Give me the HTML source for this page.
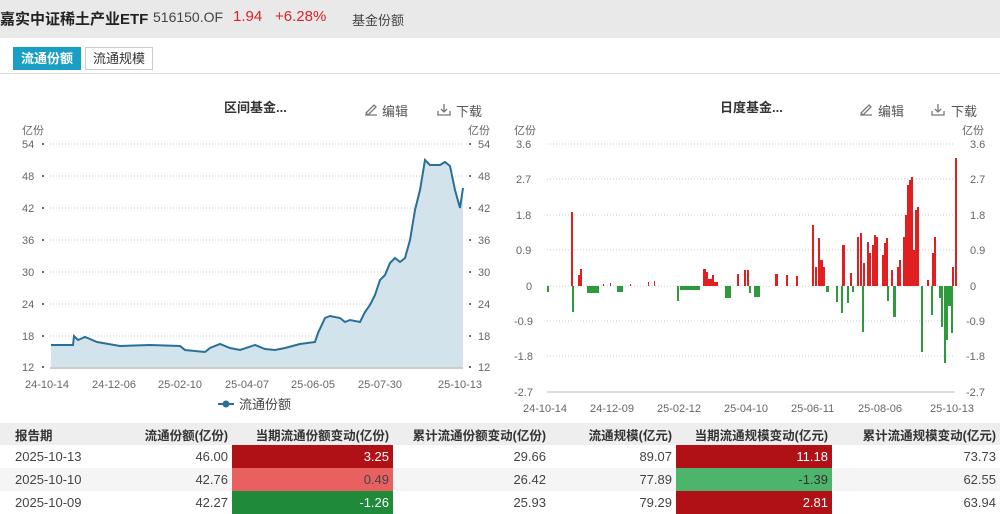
<!DOCTYPE html>
<html><head><meta charset="utf-8"><style>
*{margin:0;padding:0;box-sizing:border-box}
body{width:1000px;height:514px;overflow:hidden;background:#fff;font-family:"Liberation Sans","Noto Sans CJK SC",sans-serif;position:relative;color:#333}
.hdr{position:absolute;left:0;top:0;width:1000px;height:38px;background:#e9e9e9}
.hdr span{position:absolute;top:8px;font-size:15px}
.tab{position:absolute;top:47px;height:23px;font-size:13px;line-height:22px;padding:0 7px;border:1px solid #ccc}
table{position:absolute;left:0;top:423px;width:1000px;border-collapse:collapse;table-layout:fixed;font-family:"Liberation Sans Narrow","Liberation Sans","Noto Sans CJK SC",sans-serif;font-size:13px}
td{height:23px;text-align:right;padding:0 4px;color:#444;white-space:nowrap;overflow:hidden}
tr.h td{background:#eeeeee;font-weight:bold;color:#333;height:22px;font-size:12.5px}
td.l{text-align:left;padding-left:15px}
.r1{background:#b01116;color:#fff}.r2{background:#e96060;color:#444}.g1{background:#1f8a3a;color:#fff}.g2{background:#4cb46b;color:#333}
</style></head><body>
<div class="hdr">
<span style="left:0;font-weight:bold;color:#222">嘉实中证稀土产业ETF</span>
<span style="left:153px;font-size:14px;top:9px;color:#444">516150.OF</span>
<span style="left:233px;color:#d8232a">1.94</span>
<span style="left:275px;color:#d8232a">+6.28%</span>
<span style="left:352px;font-size:13px;top:10px;color:#444">基金份额</span>
</div>
<div class="tab" style="left:13px;background:#1a9fc4;color:#fff;border-color:#1a9fc4;font-weight:bold">流通份额</div>
<div class="tab" style="left:85px;background:#fff;color:#333">流通规模</div>
<div style="position:absolute;left:0;top:73px;width:1000px;height:1px;background:#ddd"></div>

<svg width="1000" height="420" style="position:absolute;left:0;top:0" font-family="Liberation Sans, Noto Sans CJK SC, sans-serif">
<g font-size="13" fill="#333" font-weight="bold"><text x="224" y="112">区间基金...</text><text x="720" y="112">日度基金...</text></g>
<g font-size="13" fill="#555"><text x="382" y="116">编辑</text><text x="456" y="116">下载</text><text x="878" y="116">编辑</text><text x="951" y="116">下载</text></g>
<g stroke="#777" fill="none" stroke-width="1.3"><path d="M365 115h12M366 113l8-8 2 2-8 8z"/><path d="M438 111v4h12v-4M444 104v8M441 109l3 3 3-3"/><path d="M860 115h12M861 113l8-8 2 2-8 8z"/><path d="M932 111v4h12v-4M938 104v8M935 109l3 3 3-3"/></g>
<g font-size="11" fill="#666"><text x="22" y="134">亿份</text><text x="468" y="134">亿份</text><text x="514" y="134">亿份</text><text x="962" y="134">亿份</text></g>
<g stroke="#ccc" stroke-dasharray="1 2"><path d="M50 144H463M50 176H463M50 208H463M50 240H463M50 272H463M50 304H463M50 336H463"/></g>
<g font-size="11" fill="#666">
<text x="22" y="148">54</text><text x="22" y="180">48</text><text x="22" y="212">42</text><text x="22" y="244">36</text><text x="22" y="276">30</text><text x="22" y="308">24</text><text x="22" y="340">18</text><text x="22" y="371">12</text>
<text x="478" y="148">54</text><text x="478" y="180">48</text><text x="478" y="212">42</text><text x="478" y="244">36</text><text x="478" y="276">30</text><text x="478" y="308">24</text><text x="478" y="340">18</text><text x="478" y="371">12</text>
<text x="25" y="388">24-10-14</text><text x="92" y="388">24-12-06</text><text x="158" y="388">25-02-10</text><text x="225" y="388">25-04-07</text><text x="291" y="388">25-06-05</text><text x="358" y="388">25-07-30</text><text x="438" y="388">25-10-13</text>
</g>
<g fill="#666"><rect x="42" y="143" width="2" height="2"/><rect x="42" y="175" width="2" height="2"/><rect x="42" y="207" width="2" height="2"/><rect x="42" y="239" width="2" height="2"/><rect x="42" y="271" width="2" height="2"/><rect x="42" y="303" width="2" height="2"/><rect x="42" y="335" width="2" height="2"/><rect x="42" y="366" width="2" height="2"/>
<rect x="469" y="143" width="2" height="2"/><rect x="469" y="175" width="2" height="2"/><rect x="469" y="207" width="2" height="2"/><rect x="469" y="239" width="2" height="2"/><rect x="469" y="271" width="2" height="2"/><rect x="469" y="303" width="2" height="2"/><rect x="469" y="335" width="2" height="2"/><rect x="469" y="366" width="2" height="2"/></g>
<path d="M51 367L51 345L73 345L74 336L78 340L85 337L90 339L97 342L120 346L150 345L180 346L185 350L205 352L210 348L220 344L230 348L240 350L255 345L265 349L275 350L285 348L300 344L315 342L318 333L325 318L330 316L340 318L345 322L350 320L360 322L365 312L370 305L375 295L380 280L385 275L390 263L395 258L400 262L405 258L410 240L415 210L420 190L425 160L430 165L440 165L445 162L450 166L455 190L460 208L463 188L463 367Z" fill="#d3e3ec"/>
<path d="M51 345L73 345L74 336L78 340L85 337L90 339L97 342L120 346L150 345L180 346L185 350L205 352L210 348L220 344L230 348L240 350L255 345L265 349L275 350L285 348L300 344L315 342L318 333L325 318L330 316L340 318L345 322L350 320L360 322L365 312L370 305L375 295L380 280L385 275L390 263L395 258L400 262L405 258L410 240L415 210L420 190L425 160L430 165L440 165L445 162L450 166L455 190L460 208L463 188" fill="none" stroke="#2a6f97" stroke-width="2"/>
<path d="M50 368H463" stroke="#999"/>
<path d="M218 404h16" stroke="#2a6f97" stroke-width="2"/><circle cx="226" cy="404" r="3.5" fill="#2a6f97"/>
<text x="239" y="409" font-size="13" fill="#444">流通份额</text>
<g stroke="#ccc" stroke-dasharray="1 2"><path d="M547 144H955M547 179H955M547 215H955M547 250H955M547 286H955M547 321H955M547 356H955"/></g>
<path d="M547 392H955" stroke="#bbb"/>
<g font-size="11" fill="#666">
<text x="516" y="148">3.6</text><text x="516" y="183">2.7</text><text x="516" y="219">1.8</text><text x="516" y="254">0.9</text><text x="526" y="290">0</text><text x="514" y="325">-0.9</text><text x="514" y="360">-1.8</text><text x="514" y="396">-2.7</text>
<text x="970" y="148">3.6</text><text x="970" y="183">2.7</text><text x="970" y="219">1.8</text><text x="970" y="254">0.9</text><text x="970" y="290">0</text><text x="966" y="325">-0.9</text><text x="966" y="360">-1.8</text><text x="966" y="396">-2.7</text>
<text x="523" y="412">24-10-14</text><text x="590" y="412">24-12-09</text><text x="657" y="412">25-02-12</text><text x="724" y="412">25-04-10</text><text x="791" y="412">25-06-11</text><text x="858" y="412">25-08-06</text><text x="930" y="412">25-10-13</text>
</g>
<g fill="#e02020">
<rect x="571" y="212" width="2" height="74"/><rect x="578" y="275" width="2" height="11"/><rect x="580" y="269" width="2" height="17"/>
<rect x="603" y="284" width="1" height="2"/><rect x="610" y="283" width="1" height="3"/><rect x="630" y="284" width="1" height="2"/><rect x="648" y="282" width="1" height="4"/><rect x="654" y="281" width="1" height="5"/>
<rect x="703" y="269" width="3" height="17"/><rect x="706" y="272" width="2" height="14"/><rect x="708" y="279" width="4" height="7"/><rect x="712" y="275" width="2" height="11"/><rect x="714" y="282" width="4" height="4"/>
<rect x="737" y="274" width="2" height="12"/><rect x="744" y="270" width="2" height="16"/><rect x="747" y="270" width="2" height="16"/>
<rect x="775" y="274" width="3" height="12"/><rect x="786" y="275" width="2" height="11"/><rect x="796" y="276" width="2" height="10"/>
<rect x="812" y="225" width="2" height="61"/><rect x="815" y="267" width="2" height="19"/><rect x="818" y="238" width="2" height="48"/><rect x="820" y="260" width="3" height="26"/><rect x="823" y="267" width="2" height="19"/>
<rect x="842" y="245" width="3" height="41"/><rect x="850" y="273" width="2" height="13"/><rect x="857" y="237" width="2" height="49"/><rect x="860" y="233" width="2" height="53"/><rect x="863" y="263" width="2" height="23"/><rect x="867" y="242" width="2" height="44"/><rect x="869" y="253" width="2" height="33"/><rect x="872" y="245" width="2" height="41"/><rect x="874" y="235" width="2" height="51"/><rect x="876" y="237" width="2" height="49"/>
<rect x="882" y="255" width="2" height="31"/><rect x="884" y="243" width="2" height="43"/><rect x="886" y="238" width="2" height="48"/><rect x="891" y="270" width="2" height="16"/><rect x="897" y="267" width="2" height="19"/><rect x="899" y="260" width="2" height="26"/>
<rect x="903" y="237" width="2" height="49"/><rect x="905" y="215" width="2" height="71"/><rect x="907" y="185" width="2" height="101"/><rect x="909" y="180" width="2" height="106"/><rect x="911" y="177" width="2" height="109"/><rect x="913" y="250" width="2" height="36"/><rect x="915" y="210" width="2" height="76"/><rect x="917" y="207" width="2" height="79"/>
<rect x="927" y="280" width="2" height="6"/><rect x="932" y="253" width="2" height="33"/><rect x="934" y="237" width="2" height="49"/>
<rect x="952" y="267" width="2" height="19"/><rect x="955" y="158" width="2" height="128"/>
</g>
<g fill="#2e9a3c">
<rect x="547" y="286" width="2" height="6"/><rect x="572" y="286" width="2" height="26"/><rect x="587" y="286" width="12" height="7"/><rect x="617" y="286" width="6" height="6"/><rect x="677" y="286" width="2" height="15"/><rect x="680" y="286" width="20" height="4"/><rect x="725" y="286" width="6" height="12"/><rect x="749" y="286" width="2" height="7"/><rect x="754" y="286" width="6" height="11"/>
<rect x="826" y="286" width="3" height="6"/><rect x="836" y="286" width="2" height="16"/><rect x="841" y="286" width="2" height="27"/><rect x="847" y="286" width="2" height="17"/><rect x="852" y="286" width="2" height="6"/><rect x="862" y="286" width="2" height="46"/><rect x="887" y="286" width="2" height="15"/><rect x="893" y="286" width="3" height="31"/><rect x="921" y="286" width="2" height="66"/><rect x="931" y="286" width="2" height="29"/><rect x="939" y="286" width="3" height="12"/><rect x="941" y="286" width="2" height="41"/><rect x="944" y="286" width="2" height="77"/><rect x="946" y="286" width="2" height="54"/><rect x="948" y="286" width="3" height="20"/><rect x="951" y="286" width="2" height="47"/>
</g>
<text x="996" y="78" font-size="10" fill="#333">⋮</text>
</svg>

<table>
<colgroup><col style="width:110px"><col style="width:122px"><col style="width:161px"><col style="width:157px"><col style="width:126px"><col style="width:156px"><col style="width:168px"></colgroup>
<tr class="h"><td class="l">报告期</td><td>流通份额(亿份)</td><td>当期流通份额变动(亿份)</td><td>累计流通份额变动(亿份)</td><td>流通规模(亿元)</td><td>当期流通规模变动(亿元)</td><td>累计流通规模变动(亿元)</td></tr>
<tr><td class="l">2025-10-13</td><td>46.00</td><td class="r1">3.25</td><td>29.66</td><td>89.07</td><td class="r1">11.18</td><td>73.73</td></tr>
<tr style="background:#f5f5f5"><td class="l">2025-10-10</td><td>42.76</td><td class="r2">0.49</td><td>26.42</td><td>77.89</td><td class="g2">-1.39</td><td>62.55</td></tr>
<tr><td class="l">2025-10-09</td><td>42.27</td><td class="g1">-1.26</td><td>25.93</td><td>79.29</td><td class="r1">2.81</td><td>63.94</td></tr>
</table>
</body></html>
